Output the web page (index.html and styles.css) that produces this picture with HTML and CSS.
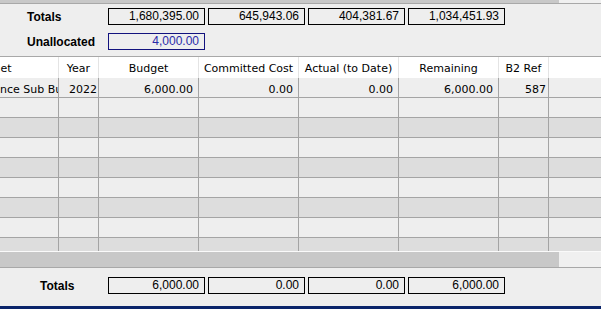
FILE: index.html
```html
<!DOCTYPE html>
<html>
<head>
    <title>Budget Allocation</title>
    <link rel="stylesheet" href="styles.css">
</head>
<body>
    <div class="hscroll">
        <div class="hscroll-thumb"></div>
    </div>

    <div class="summary top">
        <div class="summary-row">
            <div class="summary-label">Totals</div>
            <div class="summary-values">
                <div class="value-box">1,680,395.00</div>
                <div class="value-box">645,943.06</div>
                <div class="value-box">404,381.67</div>
                <div class="value-box">1,034,451.93</div>
            </div>
        </div>
        <div class="summary-row">
            <div class="summary-label">Unallocated</div>
            <div class="summary-values">
                <div class="value-box unallocated">4,000.00</div>
            </div>
        </div>
    </div>

    <div class="grid">
        <div class="grid-row header">
            <div class="cell clip"><span class="clip-head">Budget</span></div>
            <div class="cell">Year</div>
            <div class="cell">Budget</div>
            <div class="cell">Committed Cost</div>
            <div class="cell">Actual (to Date)</div>
            <div class="cell">Remaining</div>
            <div class="cell">B2 Ref</div>
            <div class="cell last"></div>
        </div>
        <div class="grid-body">
            <div class="grid-row data">
                <div class="cell clip"><span class="clip-data">Maintenance Sub Budget</span></div>
                <div class="cell num year">2022</div>
                <div class="cell num">6,000.00</div>
                <div class="cell num">0.00</div>
                <div class="cell num">0.00</div>
                <div class="cell num">6,000.00</div>
                <div class="cell num ref">587</div>
                <div class="cell last"></div>
            </div>
            <div class="grid-row light"><div class="cell"></div><div class="cell"></div><div class="cell"></div><div class="cell"></div><div class="cell"></div><div class="cell"></div><div class="cell"></div><div class="cell last"></div></div>
            <div class="grid-row dark"><div class="cell"></div><div class="cell"></div><div class="cell"></div><div class="cell"></div><div class="cell"></div><div class="cell"></div><div class="cell"></div><div class="cell last"></div></div>
            <div class="grid-row light"><div class="cell"></div><div class="cell"></div><div class="cell"></div><div class="cell"></div><div class="cell"></div><div class="cell"></div><div class="cell"></div><div class="cell last"></div></div>
            <div class="grid-row dark"><div class="cell"></div><div class="cell"></div><div class="cell"></div><div class="cell"></div><div class="cell"></div><div class="cell"></div><div class="cell"></div><div class="cell last"></div></div>
            <div class="grid-row light"><div class="cell"></div><div class="cell"></div><div class="cell"></div><div class="cell"></div><div class="cell"></div><div class="cell"></div><div class="cell"></div><div class="cell last"></div></div>
            <div class="grid-row dark"><div class="cell"></div><div class="cell"></div><div class="cell"></div><div class="cell"></div><div class="cell"></div><div class="cell"></div><div class="cell"></div><div class="cell last"></div></div>
            <div class="grid-row light"><div class="cell"></div><div class="cell"></div><div class="cell"></div><div class="cell"></div><div class="cell"></div><div class="cell"></div><div class="cell"></div><div class="cell last"></div></div>
            <div class="grid-row dark"><div class="cell"></div><div class="cell"></div><div class="cell"></div><div class="cell"></div><div class="cell"></div><div class="cell"></div><div class="cell"></div><div class="cell last"></div></div>
        </div>
    </div>

    <div class="hscroll bottom">
        <div class="hscroll-thumb"></div>
    </div>

    <div class="summary bottom">
        <div class="summary-row">
            <div class="summary-label">Totals</div>
            <div class="summary-values">
                <div class="value-box">6,000.00</div>
                <div class="value-box">0.00</div>
                <div class="value-box">0.00</div>
                <div class="value-box">6,000.00</div>
            </div>
        </div>
    </div>

    <div class="status-strip"></div>
</body>
</html>
```

FILE: styles.css
```css
body {
    margin: 0;
    width: 601px;
    height: 309px;
    overflow: hidden;
    background-color: #eeeeee;
    font-family: 'Liberation Sans', Arial, sans-serif;
    font-size: 12px;
    color: #000;
}

/* horizontal scrollbars */
.hscroll {
    height: 3px;
    background-color: #f0f0f0;
    display: flex;
}

.hscroll.bottom {
    height: 15px;
    border-bottom: 1px solid #a8a8a8;
}

.hscroll-thumb {
    width: 559px;
    background-color: #c8c8c8;
}

/* totals panels */
.summary {
    display: flex;
    flex-direction: column;
}

.summary.top {
    border-top: 1px solid #a8a8a8;
    height: 53px;
    padding-top: 4px;
    box-sizing: border-box;
    gap: 8px;
}

.summary.bottom {
    height: 38px;
    padding-top: 9px;
    box-sizing: border-box;
}

.summary-row {
    display: flex;
    align-items: center;
}

.summary-label {
    width: 81px;
    padding-left: 27px;
    font-weight: bold;
}

.summary.bottom .summary-label {
    width: 68px;
    padding-left: 40px;
}

.summary-values {
    display: flex;
    gap: 3px;
}

.value-box {
    width: 97px;
    height: 17px;
    box-sizing: border-box;
    border: 1px solid #000;
    padding-right: 5px;
    text-align: right;
    line-height: 15px;
}

.value-box.unallocated {
    border-color: #12127e;
    color: #2a2aa8;
}

/* data grid */
.grid {
    border-top: 1px solid #a8a8a8;
    font-family: 'DejaVu Sans', Tahoma, sans-serif;
    font-size: 11px;
}

.grid-row {
    display: grid;
    grid-template-columns: 59px 40px 100px 100px 100px 100px 50px 1fr;
    height: 20px;
    box-sizing: border-box;
    border-bottom: 1px solid #a4a4a4;
}

.grid-row.header {
    height: 21px;
    background-color: #fff;
    border-bottom: none;
}

.grid-row.data,
.grid-row.light {
    background-color: #eeeeee;
}

.grid-row.dark {
    background-color: #dddddd;
}

.grid-body {
    height: 174px;
    overflow: hidden;
    border-bottom: 1px solid #fafafa;
    box-sizing: border-box;
}

.cell {
    border-right: 1px solid #a4a4a4;
    white-space: nowrap;
    overflow: hidden;
    line-height: 23px;
}

.cell.last {
    border-right: none;
}

.header .cell {
    border-right-color: #e4e4e4;
    text-align: center;
    line-height: 23px;
}

.cell.num {
    text-align: right;
    padding-right: 5px;
}

.cell.year {
    padding-right: 1px;
}

.cell.ref {
    padding-right: 2px;
}

.header .cell.clip {
    text-align: left;
}

.clip-head {
    margin-left: -28px;
}

.clip-data {
    margin-left: -51px;
}

.status-strip {
    height: 3px;
    background-color: #0a246a;
}
```
